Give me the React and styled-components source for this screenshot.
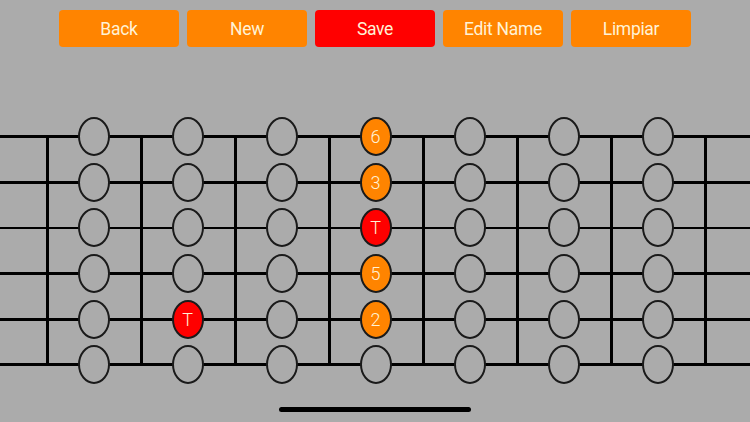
import React from "react";
import styled, { createGlobalStyle } from "styled-components";

const Global = createGlobalStyle`
  html, body { margin: 0; padding: 0; background: #ababab; }
  body { font-family: Roboto, "Liberation Sans", sans-serif; }
`;

const Page = styled.div`
  width: 750px;
  height: 422px;
  background: #ababab;
  display: flex;
  flex-direction: column;
  align-items: stretch;
  overflow: hidden;
`;

const Toolbar = styled.div`
  display: flex;
  justify-content: center;
  gap: 8px;
  padding-top: 10px;
`;

const Button = styled.button`
  width: 120px;
  height: 37px;
  border: none;
  border-radius: 4px;
  background: ${(p) => (p.$active ? "#ff0000" : "#ff8400")};
  color: #fff2d6;
  font-family: Roboto, "Liberation Sans", sans-serif;
  font-size: 17.5px;
  letter-spacing: -0.3px;
  padding: 0;
  display: flex;
  align-items: center;
  justify-content: center;
`;

const STRING_GAP = 45.6;
const FRET = 94;

const Board = styled.div`
  margin-top: 67px;
  height: ${STRING_GAP * 6}px;
  background-image:
    repeating-linear-gradient(
      to right,
      #000 0 2.5px,
      transparent 2.5px ${FRET}px
    ),
    repeating-linear-gradient(
      to bottom,
      transparent 0 21.5px,
      #000 21.5px 24.2px,
      transparent 24.2px ${STRING_GAP}px
    );
  background-size: 100% ${STRING_GAP * 5}px, 100% 100%;
  background-position: 45.5px 22.8px, 0 0;
  background-repeat: no-repeat, no-repeat;
`;

const NoteGrid = styled.div`
  margin-left: 46.5px;
  display: grid;
  grid-template-columns: repeat(7, ${FRET}px);
  grid-template-rows: repeat(6, ${STRING_GAP}px);
`;

const Cell = styled.div`
  display: flex;
  align-items: center;
  justify-content: center;
`;

const fills = { none: "#ababab", orange: "#ff8400", red: "#ff0000" };

const Note = styled.div`
  width: 32px;
  height: 39px;
  box-sizing: border-box;
  border-radius: 50%;
  border: 2px solid #1a1a1a;
  background: ${(p) => fills[p.$kind]};
  color: #fff2d6;
  font-family: Roboto, "Liberation Sans", sans-serif;
  font-weight: 300;
  font-size: 18px;
  display: flex;
  align-items: center;
  justify-content: center;
`;

const HomeBar = styled.div`
  align-self: center;
  margin-top: 19px;
  width: 192px;
  height: 5px;
  border-radius: 3px;
  background: #000;
`;

const marked = {
  "0-3": ["6", "orange"],
  "1-3": ["3", "orange"],
  "2-3": ["T", "red"],
  "3-3": ["5", "orange"],
  "4-3": ["2", "orange"],
  "4-1": ["T", "red"],
};

const buttons = ["Back", "New", "Save", "Edit Name", "Limpiar"];

export default function App() {
  const cells = [];
  for (let s = 0; s < 6; s++) {
    for (let f = 0; f < 7; f++) {
      const m = marked[`${s}-${f}`];
      cells.push(
        <Cell key={`${s}-${f}`}>
          <Note $kind={m ? m[1] : "none"}>{m ? m[0] : ""}</Note>
        </Cell>
      );
    }
  }
  return (
    <Page>
      <Global />
      <Toolbar>
        {buttons.map((b) => (
          <Button key={b} $active={b === "Save"}>
            {b}
          </Button>
        ))}
      </Toolbar>
      <Board>
        <NoteGrid>{cells}</NoteGrid>
      </Board>
      <HomeBar />
    </Page>
  );
}
